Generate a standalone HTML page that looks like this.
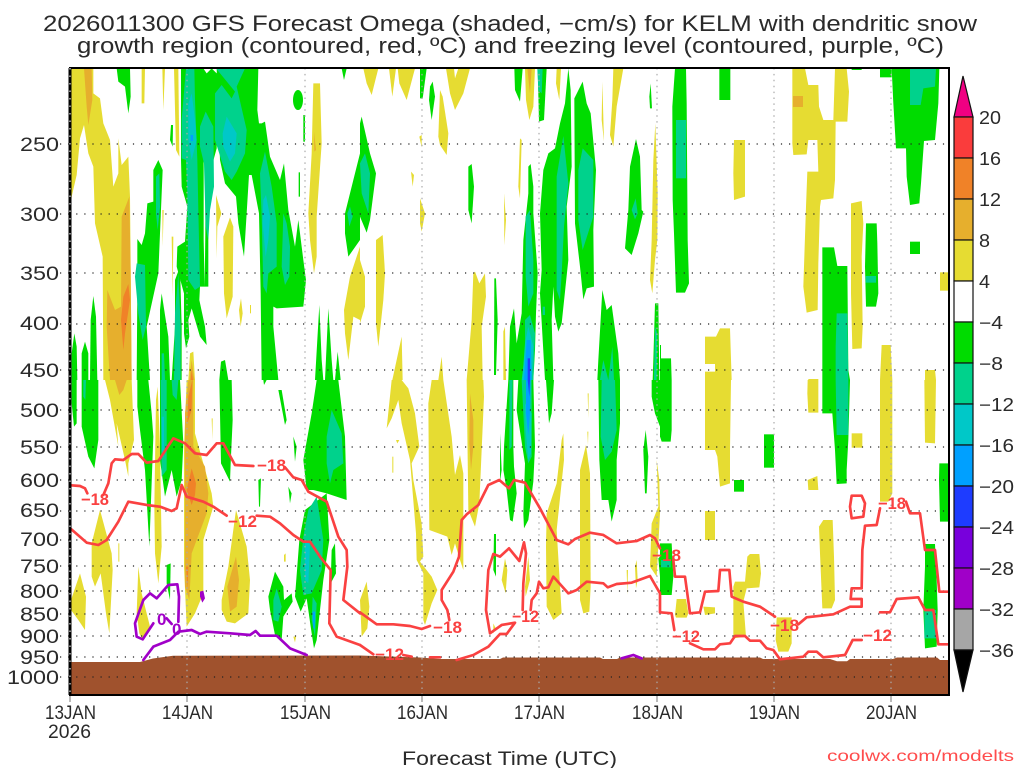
<!DOCTYPE html>
<html><head><meta charset="utf-8"><style>
html,body{margin:0;padding:0;background:#fff;width:1024px;height:768px;overflow:hidden}
svg{display:block}
text{font-family:"Liberation Sans",sans-serif;fill:#2a2a2a}
.y{fill:#e6dc32}.o{fill:#e6af2d}.r{fill:#f08228}.g{fill:#00dc00}.t{fill:#00d28c}.c{fill:#00c8c8}.b{fill:#00a0ff}.d{fill:#1e3cff}.w{fill:#fff}
.rl{fill:none;stroke:#fa4141;stroke-width:8;stroke-linejoin:round;stroke-linecap:round}
.pl{fill:none;stroke:#a000c8;stroke-width:8;stroke-linejoin:round;stroke-linecap:round}
text.lb{fill:#fa4141;font-weight:bold;font-size:16.5px}
text.lp{fill:#a000c8;font-size:17px;font-weight:bold}
.gh{stroke:#222;stroke-width:1.2;stroke-dasharray:1.2 6.9;fill:none}
.gv{stroke:#aaa;stroke-width:1.2;stroke-dasharray:1.5 4.4;fill:none}
.ax{font-size:19px}
.cb{font-size:18px}
</style></head><body>
<svg width="1024" height="768" viewBox="0 0 1024 768" xmlns="http://www.w3.org/2000/svg">
<defs><clipPath id="pc"><rect x="70" y="68" width="879" height="627"/></clipPath></defs>
<text x="43" y="31" font-size="22" textLength="934" lengthAdjust="spacingAndGlyphs">2026011300 GFS Forecast Omega (shaded, −cm/s) for KELM with dendritic snow</text>
<text x="77" y="53" font-size="22" textLength="867" lengthAdjust="spacingAndGlyphs">growth region (contoured, red, ºC) and freezing level (contoured, purple, ºC)</text>
<g clip-path="url(#pc)">
<g transform="translate(60,60) scale(.33333)">
<polygon class="y" points="33,25 100,25 100,100 120,115 130,190 150,240 160,380 175,340 175,235 185,315 205,290 210,410 215,960 130,960 128,590 105,490 100,320 85,280 72,195 60,235 50,345 35,410 33,440"/>
<polygon class="o" points="72,25 95,25 97,120 85,195 80,140"/>
<polygon class="o" points="185,470 208,410 212,640 215,960 150,960 140,800 142,690 165,750 183,740"/>
<polygon class="r" points="190,710 205,672 210,720 195,820 190,870 183,780"/>
<polygon class="y" points="245,25 255,25 253,130 245,130"/><polygon class="y" points="307,25 315,25 310,150"/><polygon class="y" points="342,25 355,25 358,290 348,270"/>
<polygon class="y" points="760,70 780,70 785,250 770,470 770,590 762,640 750,540 745,460 755,280"/><polygon class="o" points="762,215 768,270 763,275"/>
<polygon class="y" points="468,405 484,460 472,500 470,595"/><polygon class="y" points="490,530 510,472 520,500 518,710 500,775 492,700"/><polygon class="y" points="537,750 543,715 548,760 542,800"/><polygon class="y" points="570,735 573,735 573,760 570,760"/><polygon class="y" points="335,530 340,530 338,710"/><polygon class="y" points="307,450 311,450 308,560"/>
<polygon class="y" points="852,750 870,650 900,560 900,780 880,770 865,900 855,820"/>
<polygon class="y" points="385,960 390,880 400,875 405,960"/><polygon class="o" points="388,960 395,900 403,960"/><polygon class="r" points="392,960 395,930 399,960"/>
<polygon class="g" points="170,25 210,25 212,110 205,160 195,80 175,65"/>
<polygon class="g" points="363,25 430,25 440,40 455,25 470,40 475,25 470,265 455,320 445,400 445,680 420,680 418,720 435,800 440,855 420,830 395,745 385,780 388,830 378,865 372,820 372,700 350,620 352,560 375,545 382,440 365,380 363,300"/>
<polygon class="g" points="470,25 595,25 592,150 597,190 605,190 615,185 630,290 660,360 672,310 685,450 705,560 715,480 730,600 738,660 730,740 650,745 640,740 640,800 655,960 605,960 602,700 597,460 575,345 567,345 552,590 535,490 528,410 495,370 480,300"/>
<polygon class="w" points="431,300 436,320 436,520 434,680 431,540"/>
<polygon class="t" points="378,25 403,25 405,120 412,300 415,450 420,680 405,690 385,660 382,400 378,300 365,295 365,180"/>
<polygon class="t" points="420,200 437,155 460,200 462,380 450,450 445,540 437,500 432,310 420,260"/>
<polygon class="t" points="468,25 555,25 530,80 560,210 555,280 530,335 515,360 495,335 465,240 465,100 485,75 515,115 525,95"/>
<polygon class="t" points="600,340 615,275 635,380 650,490 650,620 625,640 620,700 610,680 605,470"/>
<polygon class="t" points="670,460 680,490 690,560 688,650 675,675 665,620 668,530"/>
<polygon class="g" points="232,537 245,555 255,520 262,430 280,425 280,330 295,300 308,330 300,520 295,640 260,800 270,960 230,960 232,700"/>
<polygon class="t" points="230,610 255,615 258,800 248,840 235,760 225,650"/>
<polygon class="t" points="288,350 298,340 300,440 293,510 288,460"/>
<polygon class="c" points="385,130 395,100 405,180 410,240 395,300 385,240"/>
<polygon class="c" points="488,220 500,170 530,220 525,280 510,305 490,260"/>
<polygon class="c" points="610,420 618,405 630,470 625,540 617,590 608,490"/>
<rect class="b" x="392" y="225" width="7" height="18"/>
<polygon class="g" points="730,165 735,165 735,245 730,245"/>
<ellipse class="g" cx="714" cy="120" rx="15" ry="30"/>
<polygon class="g" points="333,195 339,195 338,260 330,240"/>
<polygon class="g" points="716,337 720,337 720,410 716,410"/>
<polygon class="g" points="300,750 305,700 325,830 330,960 300,960"/>
<polygon class="g" points="345,660 360,620 365,800 365,960 335,960 345,800"/>
<polygon class="t" points="345,760 355,640 362,800 362,960 342,960"/>
<polygon class="t" points="305,880 312,880 315,960 305,960"/>
<polygon class="g" points="35,880 43,820 50,860 52,960 35,960"/>
<polygon class="g" points="65,880 75,845 85,880 85,960 65,960"/>
<polygon class="g" points="92,780 100,708 108,770 112,960 90,960"/>
<polygon class="g" points="765,960 778,735 785,900 790,960"/>
<polygon class="g" points="795,960 805,745 815,900 820,960"/>
<polygon class="g" points="825,960 833,875 842,960"/>
<polygon class="g" points="855,460 880,360 900,280 900,540 865,590 855,520"/>
<polygon class="t" points="862,460 870,440 878,470 868,500"/>
<polygon class="g" points="845,25 860,25 852,60"/>
<polygon class="g" points="478,960 483,905 495,900 505,960"/>
</g>
<g transform="translate(60,380) scale(.33333)">
<polygon class="y" points="135,0 215,0 222,180 205,250 205,290 195,240 170,130 175,200 150,60"/>
<polygon class="o" points="165,0 200,0 190,30 178,45"/>
<polygon class="y" points="288,60 293,20 300,200 305,500 295,610 285,520 283,380"/>
<polygon class="y" points="380,0 405,0 405,160 430,250 455,340 460,380 430,480 430,640 405,700 380,740 372,560 372,200"/>
<polygon class="o" points="385,0 400,0 400,200 435,260 445,340 440,400 410,480 395,520 388,660 375,620 375,100"/>
<polygon class="r" points="385,50 397,0 395,90 382,130"/><polygon class="r" points="395,265 408,310 405,345 395,375 380,330"/><polygon class="r" points="378,560 385,560 383,625"/>
<polygon class="y" points="33,660 60,580 78,650 75,750 55,720 33,690"/>
<polygon class="y" points="95,490 120,390 155,520 158,570 148,760 138,700 122,580 105,620 95,590"/>
<polygon class="y" points="230,700 235,560 245,640 270,740 248,780 238,760"/>
<polygon class="y" points="485,660 505,560 528,390 560,500 570,600 565,700 525,730 500,725 485,690"/>
<polygon class="o" points="502,620 528,530 537,600 530,680 510,695"/>
<polygon class="y" points="175,490 178,490 178,545 175,545"/><polygon class="y" points="672,525 677,520 677,545 672,545"/><polygon class="y" points="700,770 708,770 705,787"/><polygon class="y" points="455,115 458,115 457,180"/>
<polygon class="g" points="35,0 50,0 50,130 42,140 35,70"/>
<polygon class="g" points="65,0 115,0 115,180 103,265 85,230 65,140"/>
<polygon class="t" points="70,0 78,0 76,60 70,50"/>
<polygon class="g" points="232,0 265,0 275,100 280,170 268,500 255,270 240,150 232,80"/>
<polygon class="g" points="300,0 360,0 370,190 365,300 350,350 335,270 315,350 300,240 300,100"/>
<polygon class="t" points="302,0 320,0 320,270 305,290"/>
<polygon class="c" points="305,110 312,110 312,230 305,230"/>
<polygon class="t" points="335,0 355,0 350,60 338,45"/>
<polygon class="g" points="478,0 515,0 518,120 512,250 510,305 483,250"/>
<polygon class="g" points="320,555 332,550 330,660 320,610"/>
<polygon class="g" points="595,300 603,295 600,380 597,380"/>
<polygon class="g" points="685,320 695,340 690,370"/><polygon class="g" points="700,170 710,200 705,245"/><polygon class="g" points="655,30 665,30 680,120 675,135"/><polygon class="g" points="610,0 620,0 612,15"/>
<polygon class="g" points="770,0 835,0 855,170 860,360 800,340 760,330 740,330 730,240 755,100"/>
<polygon class="g" points="735,390 800,340 808,480 790,600 770,780 762,805 752,740 740,655 722,695 705,650 718,480"/>
<polygon class="g" points="815,510 825,490 828,580 812,610"/>
<polygon class="t" points="800,170 815,90 845,160 850,250 820,270 810,310 800,250"/>
<polygon class="t" points="730,470 745,390 770,350 790,480 785,570 755,640 730,645 720,570"/>
<polygon class="c" points="735,480 750,490 745,610 735,600"/>
<polygon class="t" points="758,650 770,670 765,770 755,720"/>
<polygon class="b" points="758,695 765,695 764,745 760,745"/>
<polygon class="g" points="625,650 645,575 670,620 672,660 695,640 698,665 670,710 665,780 645,765 630,690"/>
<polygon class="t" points="640,660 650,625 665,680 655,725 640,720"/>
</g>
<g transform="translate(360,60) scale(.33333)">
<polygon class="y" points="10,25 55,25 35,105 20,70"/><polygon class="y" points="87,25 108,25 97,110"/><polygon class="y" points="113,25 165,25 140,120 118,70"/>
<polygon class="y" points="258,25 282,25 285,55 295,25 330,25 310,100 285,150 270,100"/>
<polygon class="y" points="240,90 248,110 265,220 260,285 240,255 235,230"/>
<polygon class="y" points="480,235 485,240 480,415 475,380"/><polygon class="y" points="153,335 162,345 158,380"/><polygon class="y" points="432,400 438,480 433,555"/>
<polygon class="y" points="180,415 195,460 185,515 180,490"/><polygon class="y" points="178,230 185,225 185,262"/>
<polygon class="y" points="48,540 68,525 75,640 70,720 55,860 48,790"/><polygon class="y" points="0,600 15,650 15,740 0,790"/>
<polygon class="y" points="340,640 345,635 358,670 375,640 378,710 365,800 368,960 320,960 335,780"/>
<polygon class="y" points="97,960 125,830 128,960"/><polygon class="y" points="235,960 245,890 250,960"/><polygon class="y" points="430,815 435,800 438,960 430,960"/>
<polygon class="y" points="886,190 893,400 892,540 885,600 877,700 870,660 875,540 880,300"/>
<polygon class="y" points="495,25 525,25 520,140 508,180 498,120"/><polygon class="o" points="502,25 515,25 510,100"/>
<polygon class="y" points="590,25 603,25 598,120 588,70"/><polygon class="y" points="727,65 732,245 725,180"/><polygon class="y" points="760,25 790,25 770,140 760,260 750,225 757,120"/>
<polygon class="g" points="180,25 200,25 188,115 180,115"/><polygon class="g" points="210,80 218,65 225,110 215,180 207,120"/>
<polygon class="g" points="463,25 488,25 480,125 465,90"/><polygon class="g" points="533,25 560,25 552,180 537,185"/><polygon class="t" points="532,25 548,25 545,100 535,90"/>
<polygon class="g" points="5,170 30,280 48,340 30,480 20,518 0,470 0,190"/><polygon class="t" points="0,310 15,280 30,340 25,460 5,400"/>
<polygon class="g" points="325,320 335,312 342,380 335,490 325,450"/>
<polygon class="g" points="505,320 512,312 520,380 520,460 533,640 528,760 525,870 520,960 445,960 450,800 462,745 470,850 485,760 490,540 505,400"/>
<polygon class="t" points="497,470 510,450 520,600 520,700 505,740 497,650"/>
<polygon class="t" points="495,780 510,765 525,820 520,960 485,960 495,880"/>
<polygon class="c" points="495,850 505,800 520,860 515,960 487,960"/>
<polygon class="b" points="500,840 512,840 515,960 492,960"/><rect class="d" x="503" y="895" width="7" height="65"/>
<polygon class="g" points="540,460 550,330 565,280 585,265 600,190 615,130 625,25 632,90 635,320 620,440 625,600 605,790 595,815 585,770 580,680 575,780 580,960 555,960 540,700 545,630"/>
<polygon class="t" points="590,350 610,228 625,370 612,500 605,640 600,720 590,690 590,500"/><rect class="t" x="548" y="740" width="7" height="25"/>
<polygon class="g" points="643,115 668,65 680,130 692,160 708,330 700,510 702,680 680,685 670,718 660,620 645,490"/>
<polygon class="t" points="655,330 668,265 700,300 700,470 668,570 655,480"/>
<polygon class="g" points="810,320 828,237 840,290 845,450 850,455 835,520 815,585 795,565 805,450"/><polygon class="t" points="815,450 827,415 833,460 825,478"/>
<polygon class="g" points="868,110 872,70 876,145 870,145"/>
<polygon class="g" points="712,960 715,900 727,690 740,750 755,735 775,880 780,960"/><polygon class="t" points="725,930 730,900 745,960 720,960"/><polygon class="t" points="745,960 757,860 762,960"/>
<polygon class="g" points="403,655 408,655 413,780 408,945 402,945"/>
<polygon class="g" points="885,730 895,730 898,960 878,960 880,900"/><polygon class="t" points="885,800 892,820 890,960 882,960"/>
</g>
<g transform="translate(360,380) scale(.33333)">
<polygon class="y" points="95,0 125,0 145,25 165,100 178,200 155,250 160,300 185,430 190,530 180,545 215,590 232,630 215,670 195,735 190,720 190,580 170,540 168,460 150,240 125,130 115,60 95,115 80,145"/>
<polygon class="y" points="205,70 215,0 250,0 275,170 285,285 300,225 310,280 310,570 300,540 285,490 275,525 262,470 208,450"/>
<polygon class="y" points="320,0 370,0 372,50 358,370 345,440 325,390"/><polygon class="o" points="330,40 340,120 340,200 333,270 328,190"/>
<polygon class="y" points="0,660 20,605 28,680 22,745 5,770"/>
<polygon class="y" points="560,400 590,310 605,180 610,160 612,240 590,450 605,700 580,720 560,680 558,500"/>
<polygon class="y" points="660,270 678,195 690,280 692,620 688,695 670,700 660,660"/>
<polygon class="y" points="425,600 435,535 442,570 437,640"/><polygon class="y" points="495,620 505,530 510,600 497,650"/>
<polygon class="y" points="800,570 804,570 802,645"/><polygon class="y" points="825,560 830,540 833,600 828,625"/>
<polygon class="y" points="870,560 875,430 895,380 890,240 898,300 900,400 890,590"/>
<polygon class="y" points="683,40 686,40 685,115"/><polygon class="y" points="682,155 685,155 684,195"/><polygon class="y" points="108,180 118,180 112,190"/><polygon class="y" points="97,230 100,230 100,278 97,278"/><polygon class="y" points="400,730 407,745 400,760"/>
<polygon class="g" points="445,0 460,0 460,200 462,260 470,340 458,425 450,420 440,330 430,270 432,200"/>
<polygon class="g" points="420,160 425,270 420,305"/>
<polygon class="g" points="475,0 520,0 525,200 520,305 505,420 492,445 490,400 495,250 470,90"/>
<polygon class="t" points="448,0 458,0 455,200 448,210"/>
<polygon class="t" points="485,0 515,0 515,230 505,250 495,200"/>
<polygon class="c" points="495,70 515,100 513,220 505,240 497,150"/>
<polygon class="b" points="498,0 512,0 510,100 505,165 498,100"/><polygon class="d" points="503,0 510,0 508,50"/>
<polygon class="g" points="558,0 582,0 575,100 567,130"/>
<polygon class="g" points="715,0 780,0 780,130 770,240 770,360 755,425 745,360 725,360 718,240"/>
<polygon class="t" points="725,0 765,0 770,150 755,215 735,240 722,170"/>
<polygon class="g" points="850,210 857,150 865,230 860,340 855,340"/>
<polygon class="g" points="875,0 900,0 900,140 885,100 875,50"/>
<polygon class="g" points="402,462 408,462 408,590 400,570"/><polygon class="g" points="895,535 900,530 900,590"/>
</g>
<g transform="translate(660,60) scale(.33333)">
<polygon class="g" points="45,25 78,25 80,130 83,540 87,670 75,698 48,698 42,520 38,420 37,140"/><rect class="t" x="48" y="180" width="30" height="175"/>
<rect class="g" x="178" y="25" width="33" height="95"/>
<rect class="g" x="660" y="25" width="35" height="27"/>
<polygon class="g" points="695,25 838,25 835,130 825,240 792,243 783,370 778,430 750,435 740,350 738,265 708,265 700,130"/>
<polygon class="t" points="750,25 828,25 825,80 790,85 782,135 750,135"/>
<rect class="g" x="575" y="25" width="30" height="5"/>
<polygon class="g" points="618,490 650,490 652,550 655,700 648,740 618,740 615,620"/><rect class="t" x="617" y="648" width="31" height="20"/>
<rect class="g" x="750" y="545" width="30" height="37"/>
<polygon class="g" points="487,562 522,562 532,618 562,618 565,930 570,960 487,960"/>
<polygon class="t" points="530,760 562,760 565,960 527,960 527,860"/>
<polygon class="g" points="0,855 3,855 3,895 33,895 35,960 0,960"/>
<polygon class="y" points="397,25 435,25 445,75 475,75 477,140 490,180 520,180 525,25 560,25 567,95 562,185 527,185 525,360 520,415 483,420 480,440 475,610 473,750 440,758 430,680 438,440 442,335 475,335 472,240 445,240 440,283 400,285 397,250"/>
<rect class="o" x="399" y="108" width="30" height="33"/>
<polygon class="y" points="222,240 255,240 255,410 222,420 220,340"/>
<polygon class="y" points="573,430 605,423 610,490 605,590 608,800 605,865 577,867 573,700"/>
<rect class="y" x="840" y="637" width="25" height="55"/>
<polygon class="y" points="135,830 168,830 180,805 210,805 215,960 135,960 135,935 165,935 165,912 135,912"/>
<polygon class="y" points="660,960 665,855 692,855 697,960"/>
<polygon class="y" points="795,930 825,930 828,960 795,960"/>
<rect class="y" x="445" y="957" width="30" height="3"/>
</g>
<g transform="translate(660,380) scale(.33333)">
<polygon class="g" points="0,0 35,0 35,150 32,185 5,185 0,170"/>
<rect class="g" x="312" y="163" width="30" height="100"/><rect class="g" x="222" y="300" width="30" height="35"/>
<polygon class="g" points="487,0 570,0 565,180 560,270 560,310 530,312 525,210 517,100 487,100"/>
<polygon class="t" points="527,0 565,0 565,165 530,165"/>
<polygon class="g" points="838,250 868,250 868,425 840,425 837,300"/>
<polygon class="g" points="0,490 35,490 40,590 35,645 0,645"/><rect class="t" x="3" y="540" width="29" height="22"/>
<polygon class="g" points="795,492 825,492 830,600 833,690 830,800 795,805 790,690 795,560"/>
<polygon class="t" points="793,690 828,690 830,775 793,775"/>
<polygon class="y" points="135,0 213,0 210,210 210,310 180,320 172,230 165,210 135,210"/>
<polygon class="y" points="443,0 475,0 475,98 445,98 442,40"/><polygon class="y" points="793,0 828,0 825,190 795,188"/>
<polygon class="y" points="660,0 697,0 697,340 685,365 660,365"/>
<rect class="y" x="575" y="160" width="32" height="43"/><polygon class="y" points="443,300 472,288 475,330 445,330"/>
<rect class="y" x="135" y="393" width="30" height="87"/>
<polygon class="y" points="477,440 490,420 518,420 522,530 525,660 515,685 487,685 480,520"/>
<polygon class="y" points="45,705 50,657 78,657 85,700 80,713 48,713"/><polygon class="y" points="130,680 165,682 165,700 135,705"/>
<polygon class="y" points="262,530 270,522 298,522 303,580 298,622 260,625 250,665 258,770 220,775 220,620 225,605 255,605"/>
<polygon class="y" points="350,712 395,712 395,790 385,815 355,815 347,780"/>
</g>
<polygon fill="#a0522d" points="70,662 140,662 153,658.500 173,655.700 360,655.500 420,657.500 440,659 500,659 503,657.500 600,657.500 603,659 617,659 620,657.500 760,657.500 763,659 830,659 837,661.300 847,661.300 850,659 893,659 897,657.500 937,657.500 940,660 949,660 949,695 70,695"/>
</g>
<g class="gv"><path d="M187 68V695M305 68V695M422 68V695M539 68V695M657 68V695M774 68V695M891 68V695"/></g>
<g class="gh"><path d="M60 144H949M60 214H949M60 273H949M60 324H949M60 370H949M60 410H949M60 447H949M60 480H949M60 511H949M60 540H949M60 566H949M60 591H949M60 614H949M60 636H949M60 657H949M60 677H949"/></g>
<g clip-path="url(#pc)">
<g transform="translate(60,380) scale(.33333)">
<polyline class="rl" points="33,316 60,318 75,325 82,340"/>
<polyline class="rl" points="130,345 145,310 155,250 165,238 190,240 215,222 235,222 260,248 295,243 320,205 340,175 375,190 405,220 440,225 470,190 490,190 525,255 580,258"/>
<polyline class="rl" points="675,262 700,292 725,300 745,335 800,365 835,470 860,510 862,560 850,660 900,700"/>
<polyline class="rl" points="33,447 80,488 115,495 140,480 175,425 205,365 260,375 300,380 335,393 350,385 365,315 380,350 430,365 460,380 500,407"/>
<polyline class="rl" points="590,407 630,410 660,430 700,465 730,485 750,485 780,530 812,570 808,730 830,770 900,795"/>
<polyline class="pl" points="250,840 280,800 330,780 355,755 395,750 420,762 440,755 510,760 570,765 587,753 600,767 650,767 690,805 740,825"/>
<polyline class="pl" points="355,725 357,650 352,613 325,615 290,655 270,640 250,660 225,730 230,770 248,778 280,730"/>
<polyline class="pl" points="320,715 335,732"/>
<polygon fill="#a000c8" points="420,635 430,632 435,655 427,668 420,650"/>
</g>
<g transform="translate(360,380) scale(.33333)">
<polyline class="rl" points="0,697 50,733 100,733 150,738 185,747 210,738"/>
<polyline class="rl" points="268,720 262,690 245,660 245,630 280,575 297,530 305,420 320,403 355,375 385,315 418,300 447,325 462,300 495,308 540,385 590,480 625,493 645,477 690,458 730,465 770,490 830,483 870,465 885,475 900,505"/>
<polyline class="rl" points="0,795 40,823"/><polyline class="rl" points="130,825 155,830"/><polyline class="rl" points="210,832 240,832"/>
<polyline class="rl" points="290,840 340,825 385,800 420,762 440,762 465,728 425,735 390,760 378,690 385,570 400,522 420,530 447,505 478,543 492,487 498,520 490,610 488,690"/>
<polyline class="rl" points="512,690 515,660 530,640 537,605 550,625 565,622 580,590 625,640 650,630 680,605 730,610 743,622 770,612 815,608 870,588 900,640 900,695"/>
<polyline class="pl" points="785,835 820,825 845,835"/>
</g>
<g transform="translate(660,380) scale(.33333)">
<polyline class="rl" points="40,540 45,590 75,590 90,700 120,697 135,635 175,633 180,570 208,570 215,650 250,665 300,680 345,710"/>
<polyline class="rl" points="415,733 440,712 520,703 570,680 605,680 605,657 572,657 575,625 605,625 607,510 615,437 650,435 660,385"/>
<polyline class="rl" points="738,365 750,400 780,400 795,510 825,510 838,635 868,635"/>
<polyline class="rl" points="0,697 35,700 43,750"/>
<polyline class="rl" points="90,790 130,808 165,808 180,793 210,790 225,768 255,768 270,782 300,782 320,805 340,810 360,838 430,830 445,815 470,815 490,832 555,825 578,780 605,780"/>
<polyline class="rl" points="660,697 690,697 710,657 775,652 795,690 820,690 835,793 868,793"/>
<polygon class="rl" points="575,347 605,347 615,370 610,410 575,415 570,380"/>
</g>
</g>
<text class="lb" x="81" y="505" textLength="28" lengthAdjust="spacingAndGlyphs">−18</text>
<text class="lb" x="257" y="471" textLength="29" lengthAdjust="spacingAndGlyphs">−18</text>
<text class="lb" x="228" y="527" textLength="29" lengthAdjust="spacingAndGlyphs">−12</text>
<text class="lb" x="433" y="633" textLength="29" lengthAdjust="spacingAndGlyphs">−18</text>
<text class="lb" x="375" y="660" textLength="29" lengthAdjust="spacingAndGlyphs">−12</text>
<text class="lb" x="512" y="622" textLength="27" lengthAdjust="spacingAndGlyphs">−12</text>
<text class="lb" x="652" y="561" textLength="29" lengthAdjust="spacingAndGlyphs">−18</text>
<text class="lb" x="672" y="642" textLength="28" lengthAdjust="spacingAndGlyphs">−12</text>
<text class="lb" x="770" y="631" textLength="29" lengthAdjust="spacingAndGlyphs">−18</text>
<text class="lb" x="863" y="641" textLength="29" lengthAdjust="spacingAndGlyphs">−12</text>
<text class="lb" x="878" y="509" textLength="28" lengthAdjust="spacingAndGlyphs">−18</text>
<text class="lp" x="157" y="625">0</text>
<text class="lp" x="172" y="635">0</text>
<rect x="70" y="68" width="879" height="627" fill="none" stroke="#000" stroke-width="2"/>
<path d="M70 68V695" stroke="#000" stroke-width="3"/>
<path d="M70 68V695" stroke="#888" stroke-width="2" stroke-dasharray="1.500 6" fill="none"/>
<path d="M70 696v6M187 696v6M305 696v6M422 696v6M539 696v6M657 696v6M774 696v6M891 696v6" stroke="#777" stroke-width="1"/>
<g class="ax" text-anchor="start">
<text x="20" y="151" textLength="39" lengthAdjust="spacingAndGlyphs">250</text><text x="20" y="221" textLength="39" lengthAdjust="spacingAndGlyphs">300</text><text x="20" y="280" textLength="39" lengthAdjust="spacingAndGlyphs">350</text><text x="20" y="330" textLength="39" lengthAdjust="spacingAndGlyphs">400</text><text x="20" y="377" textLength="39" lengthAdjust="spacingAndGlyphs">450</text><text x="20" y="417" textLength="39" lengthAdjust="spacingAndGlyphs">500</text><text x="20" y="454" textLength="39" lengthAdjust="spacingAndGlyphs">550</text><text x="20" y="487" textLength="39" lengthAdjust="spacingAndGlyphs">600</text><text x="20" y="517" textLength="39" lengthAdjust="spacingAndGlyphs">650</text><text x="20" y="546" textLength="39" lengthAdjust="spacingAndGlyphs">700</text><text x="20" y="573" textLength="39" lengthAdjust="spacingAndGlyphs">750</text><text x="20" y="598" textLength="39" lengthAdjust="spacingAndGlyphs">800</text><text x="20" y="621" textLength="39" lengthAdjust="spacingAndGlyphs">850</text><text x="20" y="643" textLength="39" lengthAdjust="spacingAndGlyphs">900</text><text x="20" y="664" textLength="39" lengthAdjust="spacingAndGlyphs">950</text><text x="7" y="684" textLength="52" lengthAdjust="spacingAndGlyphs">1000</text>
</g>
<g class="ax">
<text x="45" y="719" textLength="51" lengthAdjust="spacingAndGlyphs">13JAN</text><text x="162" y="719" textLength="51" lengthAdjust="spacingAndGlyphs">14JAN</text><text x="280" y="719" textLength="51" lengthAdjust="spacingAndGlyphs">15JAN</text><text x="397" y="719" textLength="51" lengthAdjust="spacingAndGlyphs">16JAN</text><text x="514" y="719" textLength="51" lengthAdjust="spacingAndGlyphs">17JAN</text><text x="632" y="719" textLength="51" lengthAdjust="spacingAndGlyphs">18JAN</text><text x="749" y="719" textLength="51" lengthAdjust="spacingAndGlyphs">19JAN</text><text x="866" y="719" textLength="51" lengthAdjust="spacingAndGlyphs">20JAN</text>
<text x="48" y="738" textLength="43" lengthAdjust="spacingAndGlyphs">2026</text>
<text x="402" y="765" textLength="215" lengthAdjust="spacingAndGlyphs">Forecast Time (UTC)</text>
</g>
<text x="827" y="761" font-size="16" textLength="187" lengthAdjust="spacingAndGlyphs" style="fill:#ff4c4c">coolwx.com/modelts</text>
<g stroke="#111" stroke-width="1.200">
<polygon fill="#f00082" points="963,76 954,117 973,117"/>
<rect x="954" y="117" width="19" height="41" fill="#fa3c3c"/>
<rect x="954" y="158" width="19" height="41" fill="#f08228"/>
<rect x="954" y="199" width="19" height="41" fill="#e6af2d"/>
<rect x="954" y="240" width="19" height="41" fill="#e6dc32"/>
<rect x="954" y="281" width="19" height="41" fill="#fff"/>
<rect x="954" y="322" width="19" height="41" fill="#00dc00"/>
<rect x="954" y="363" width="19" height="41" fill="#00d28c"/>
<rect x="954" y="404" width="19" height="41" fill="#00c8c8"/>
<rect x="954" y="445" width="19" height="41" fill="#00a0ff"/>
<rect x="954" y="486" width="19" height="41" fill="#1e3cff"/>
<rect x="954" y="527" width="19" height="41" fill="#7800dc"/>
<rect x="954" y="568" width="19" height="41" fill="#a000c8"/>
<rect x="954" y="609" width="19" height="41" fill="#a6a6a6"/>
<polygon fill="#000" points="954,650 973,650 963,692"/>
</g>
<g class="cb">
<text x="979" y="124" textLength="22" lengthAdjust="spacingAndGlyphs">20</text><text x="979" y="165" textLength="22" lengthAdjust="spacingAndGlyphs">16</text><text x="979" y="206" textLength="22" lengthAdjust="spacingAndGlyphs">12</text><text x="979" y="247" textLength="11" lengthAdjust="spacingAndGlyphs">8</text><text x="979" y="288" textLength="11" lengthAdjust="spacingAndGlyphs">4</text>
<text x="979" y="329" textLength="24" lengthAdjust="spacingAndGlyphs">−4</text><text x="979" y="370" textLength="24" lengthAdjust="spacingAndGlyphs">−8</text><text x="979" y="411" textLength="35" lengthAdjust="spacingAndGlyphs">−12</text><text x="979" y="452" textLength="35" lengthAdjust="spacingAndGlyphs">−16</text><text x="979" y="493" textLength="35" lengthAdjust="spacingAndGlyphs">−20</text><text x="979" y="534" textLength="35" lengthAdjust="spacingAndGlyphs">−24</text><text x="979" y="575" textLength="35" lengthAdjust="spacingAndGlyphs">−28</text><text x="979" y="616" textLength="35" lengthAdjust="spacingAndGlyphs">−32</text><text x="979" y="657" textLength="35" lengthAdjust="spacingAndGlyphs">−36</text>
</g>
</svg>
</body></html>
